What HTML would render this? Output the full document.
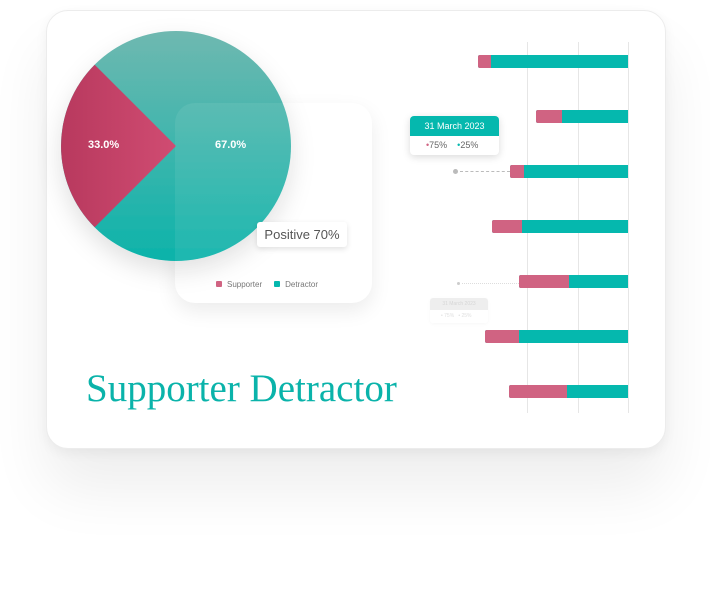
<!DOCTYPE html>
<html><head><style>
body{margin:0;width:710px;height:606px;background:#fff;position:relative;overflow:hidden;font-family:"Liberation Sans",sans-serif}
.card{position:absolute;left:46px;top:10px;width:618px;height:437px;border-radius:22px;background:#fff;border:1px solid #ececec;box-shadow:0 40px 60px rgba(0,0,0,0.07),0 4px 12px rgba(0,0,0,0.05)}
.abs{position:absolute}
.bar{position:absolute;height:13px;right:82px;background:#05b8ae;border-radius:2px 0 0 2px}
.bar i{position:absolute;left:0;top:0;height:13px;background:#d06382;border-radius:2px 0 0 2px}
.grid{position:absolute;top:42px;width:1px;height:371px;background:#e6e6e6}
</style></head><body>
<div class="card"></div>
<div class="grid" style="left:527px"></div>
<div class="grid" style="left:578px"></div>
<div class="grid" style="left:628px"></div>
<div class="bar" style="top:55px;left:478px"><i style="width:13px"></i></div>
<div class="bar" style="top:110px;left:536px"><i style="width:26px"></i></div>
<div class="bar" style="top:165px;left:510px"><i style="width:14px"></i></div>
<div class="bar" style="top:220px;left:492px"><i style="width:30px"></i></div>
<div class="bar" style="top:275px;left:519px"><i style="width:50px"></i></div>
<div class="bar" style="top:330px;left:485px"><i style="width:34px"></i></div>
<div class="bar" style="top:385px;left:509px"><i style="width:58px"></i></div>
<div class="abs" style="left:453px;top:169px;width:5px;height:5px;border-radius:50%;background:#bbb"></div>
<div class="abs" style="left:460px;top:171px;width:50px;border-top:1px dashed #bbb"></div>
<div class="abs" style="left:457px;top:282px;width:3px;height:3px;border-radius:50%;background:#ccc"></div>
<div class="abs" style="left:462px;top:283px;width:57px;border-top:1px dotted #ddd"></div>
<div class="abs" style="left:410px;top:116px;width:89px;height:39px;border-radius:4px;background:#fff;box-shadow:0 2px 8px rgba(0,0,0,0.15);overflow:hidden">
<div style="background:#05b8ae;height:20px;color:#fff;font-size:9px;text-align:center;line-height:20px">31 March 2023</div>
<div style="font-size:9px;color:#666;line-height:19px;padding-left:16px"><span style="color:#d06382">•</span>75% &nbsp; &nbsp;<span style="color:#05b8ae">•</span>25%</div></div>
<div class="abs" style="left:430px;top:298px;width:58px;height:25px;border-radius:3px;background:#fff;box-shadow:0 1px 4px rgba(0,0,0,0.06);overflow:hidden;opacity:.6">
<div style="background:#e4e4e4;height:12px;color:#bbb;font-size:5px;text-align:center;line-height:12px">31 March 2023</div>
<div style="font-size:5px;color:#ccc;line-height:13px;padding-left:11px">• 75% &nbsp; • 25%</div></div>
<div class="abs" style="left:175px;top:103px;width:197px;height:200px;border-radius:20px;background:#fff;box-shadow:0 8px 20px rgba(0,0,0,0.08)"></div>
<svg class="abs" style="left:0;top:0" width="400" height="320">
<defs>
<linearGradient id="t" x1="0" y1="0" x2="0" y2="1"><stop offset="0" stop-color="#6fb8b0"/><stop offset="1" stop-color="#0cb3aa"/></linearGradient>
<linearGradient id="r" x1="0" y1="0" x2="1" y2="0"><stop offset="0" stop-color="#b8395e"/><stop offset="1" stop-color="#d04c72"/></linearGradient>
<filter id="s" x="-30%" y="-30%" width="160%" height="160%"><feDropShadow dx="0" dy="10" stdDeviation="12" flood-opacity="0.12"/></filter>
</defs>
<circle cx="176" cy="146" r="115" fill="url(#t)" filter="url(#s)"/>
<path d="M176 146 L94.7 64.7 A115 115 0 0 0 94.7 227.3 Z" fill="url(#r)"/>
</svg>
<div class="abs" style="left:175px;top:103px;width:197px;height:200px;border-radius:20px;background:rgba(255,255,255,0.07)"></div>
<div class="abs" style="left:88px;top:139px;color:#fff;font-weight:bold;font-size:11px">33.0%</div>
<div class="abs" style="left:215px;top:139px;color:#fff;font-weight:bold;font-size:11px">67.0%</div>
<div class="abs" style="left:257px;top:222px;width:90px;height:25px;background:#fff;border-radius:3px;box-shadow:0 2px 6px rgba(0,0,0,0.12);font-size:13px;color:#555;line-height:25px;text-align:center">Positive 70%</div>
<div class="abs" style="left:216px;top:280px;font-size:8px;color:#777;line-height:9px"><span style="display:inline-block;width:6px;height:6px;background:#d06382;border-radius:1px;margin-right:5px"></span>Supporter<span style="display:inline-block;width:6px;height:6px;background:#05b8ae;border-radius:1px;margin:0 5px 0 12px"></span>Detractor</div>
<div class="abs" style="left:86px;top:366px;font-family:'Liberation Serif',serif;font-size:39px;color:#0ab3aa;white-space:nowrap">Supporter Detractor</div>
</body></html>
